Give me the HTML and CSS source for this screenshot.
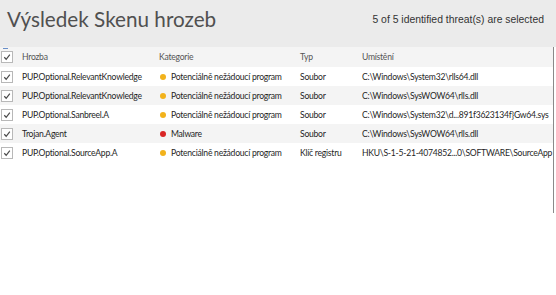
FILE: index.html
```html
<!DOCTYPE html>
<html>
<head>
<meta charset="utf-8">
<link rel="stylesheet" href="styles.css">
</head>
<body>
<div class="page">
  <header class="top">
    <h1 class="title">Výsledek Skenu hrozeb</h1>
    <div class="count">5 of 5 identified threat(s) are selected</div>
  </header>
  <div class="table">
    <div class="row head">
      <div class="c-chk"><span class="box"><svg viewBox="0 0 11 11"><path d="M2.5 5.8 L4.6 8 L8.6 2.8" /></svg></span><span class="sort"></span></div>
      <div class="c-name">Hrozba</div>
      <div class="c-cat">Kategorie</div>
      <div class="c-type">Typ</div>
      <div class="c-loc">Umístění</div>
    </div>
    <div class="row">
      <div class="c-chk"><span class="box"><svg viewBox="0 0 11 11"><path d="M2.5 5.8 L4.6 8 L8.6 2.8" /></svg></span></div>
      <div class="c-name">PUP.Optional.RelevantKnowledge</div>
      <div class="c-cat"><span class="dot pup"></span>Potenciálně nežádoucí program</div>
      <div class="c-type">Soubor</div>
      <div class="c-loc">C:\Windows\System32\rlls64.dll</div>
    </div>
    <div class="row alt">
      <div class="c-chk"><span class="box"><svg viewBox="0 0 11 11"><path d="M2.5 5.8 L4.6 8 L8.6 2.8" /></svg></span></div>
      <div class="c-name">PUP.Optional.RelevantKnowledge</div>
      <div class="c-cat"><span class="dot pup"></span>Potenciálně nežádoucí program</div>
      <div class="c-type">Soubor</div>
      <div class="c-loc">C:\Windows\SysWOW64\rlls.dll</div>
    </div>
    <div class="row">
      <div class="c-chk"><span class="box"><svg viewBox="0 0 11 11"><path d="M2.5 5.8 L4.6 8 L8.6 2.8" /></svg></span></div>
      <div class="c-name">PUP.Optional.Sanbreel.A</div>
      <div class="c-cat"><span class="dot pup"></span>Potenciálně nežádoucí program</div>
      <div class="c-type">Soubor</div>
      <div class="c-loc">C:\Windows\System32\d...891f3623134f}Gw64.sys</div>
    </div>
    <div class="row alt">
      <div class="c-chk"><span class="box"><svg viewBox="0 0 11 11"><path d="M2.5 5.8 L4.6 8 L8.6 2.8" /></svg></span></div>
      <div class="c-name">Trojan.Agent</div>
      <div class="c-cat"><span class="dot mal"></span>Malware</div>
      <div class="c-type">Soubor</div>
      <div class="c-loc">C:\Windows\SysWOW64\rlls.dll</div>
    </div>
    <div class="row">
      <div class="c-chk"><span class="box"><svg viewBox="0 0 11 11"><path d="M2.5 5.8 L4.6 8 L8.6 2.8" /></svg></span></div>
      <div class="c-name">PUP.Optional.SourceApp.A</div>
      <div class="c-cat"><span class="dot pup"></span>Potenciálně nežádoucí program</div>
      <div class="c-type">Klíč registru</div>
      <div class="c-loc">HKU\S-1-5-21-4074852...0\SOFTWARE\SourceApp</div>
    </div>
  </div>
</div>
</body>
</html>
```
FILE: styles.css
```css
html, body {
  margin: 0;
  padding: 0;
  background: #ffffff;
}
body {
  font-family: "Lato", "Liberation Sans", sans-serif;
  color: #333;
}
.page {
  width: 556px;
  height: 295px;
  background: #fff;
}
.top {
  height: 47px;
  background: #ebebeb;
  display: flex;
  align-items: flex-start;
  justify-content: space-between;
  padding: 0 12px 0 7px;
  box-sizing: border-box;
}
.title {
  margin: 0;
  padding-top: 4px;
  font-weight: normal;
  font-size: 20.7px;
  line-height: 30px;
  color: #505050;
}
.count {
  padding-top: 13px;
  font-family: "Liberation Sans", sans-serif;
  font-size: 10.4px;
  line-height: 14px;
  color: #333;
}
.table {
  width: 553px;
  height: 166px;
  border-right: 1px solid #8a8a8a;
}
.row {
  display: grid;
  grid-template-columns: 22px 137px 141px 62px 1fr;
  height: 19px;
  align-items: center;
  font-size: 8.6px;
  letter-spacing: -0.25px;
  color: #1f1f1f;
  white-space: nowrap;
}
.row.head {
  height: 20px;
  background: #f4f4f4;
  color: #555;
}
.row.alt {
  background: #f4f4f4;
}
.c-chk {
  position: relative;
  height: 19px;
  display: flex;
  align-items: center;
  padding-left: 1px;
}
.box {
  width: 10px;
  height: 10px;
  border: 1px solid #b8b8b8;
  background: #fff;
  display: block;
}
.box svg {
  width: 10px;
  height: 10px;
  display: block;
}
.box path {
  fill: none;
  stroke: #4a4a4a;
  stroke-width: 1.3;
}
.sort {
  position: absolute;
  left: 3px;
  top: 0;
  width: 5px;
  height: 1px;
  background: #6a8fc8;
}
.c-cat {
  display: flex;
  align-items: center;
}
.dot {
  flex-shrink: 0;
  width: 6px;
  height: 6px;
  border-radius: 50%;
  margin: 0 5px 0 1px;
}
.dot.pup { background: #f2b21b; }
.dot.mal { background: #d92626; }
```
